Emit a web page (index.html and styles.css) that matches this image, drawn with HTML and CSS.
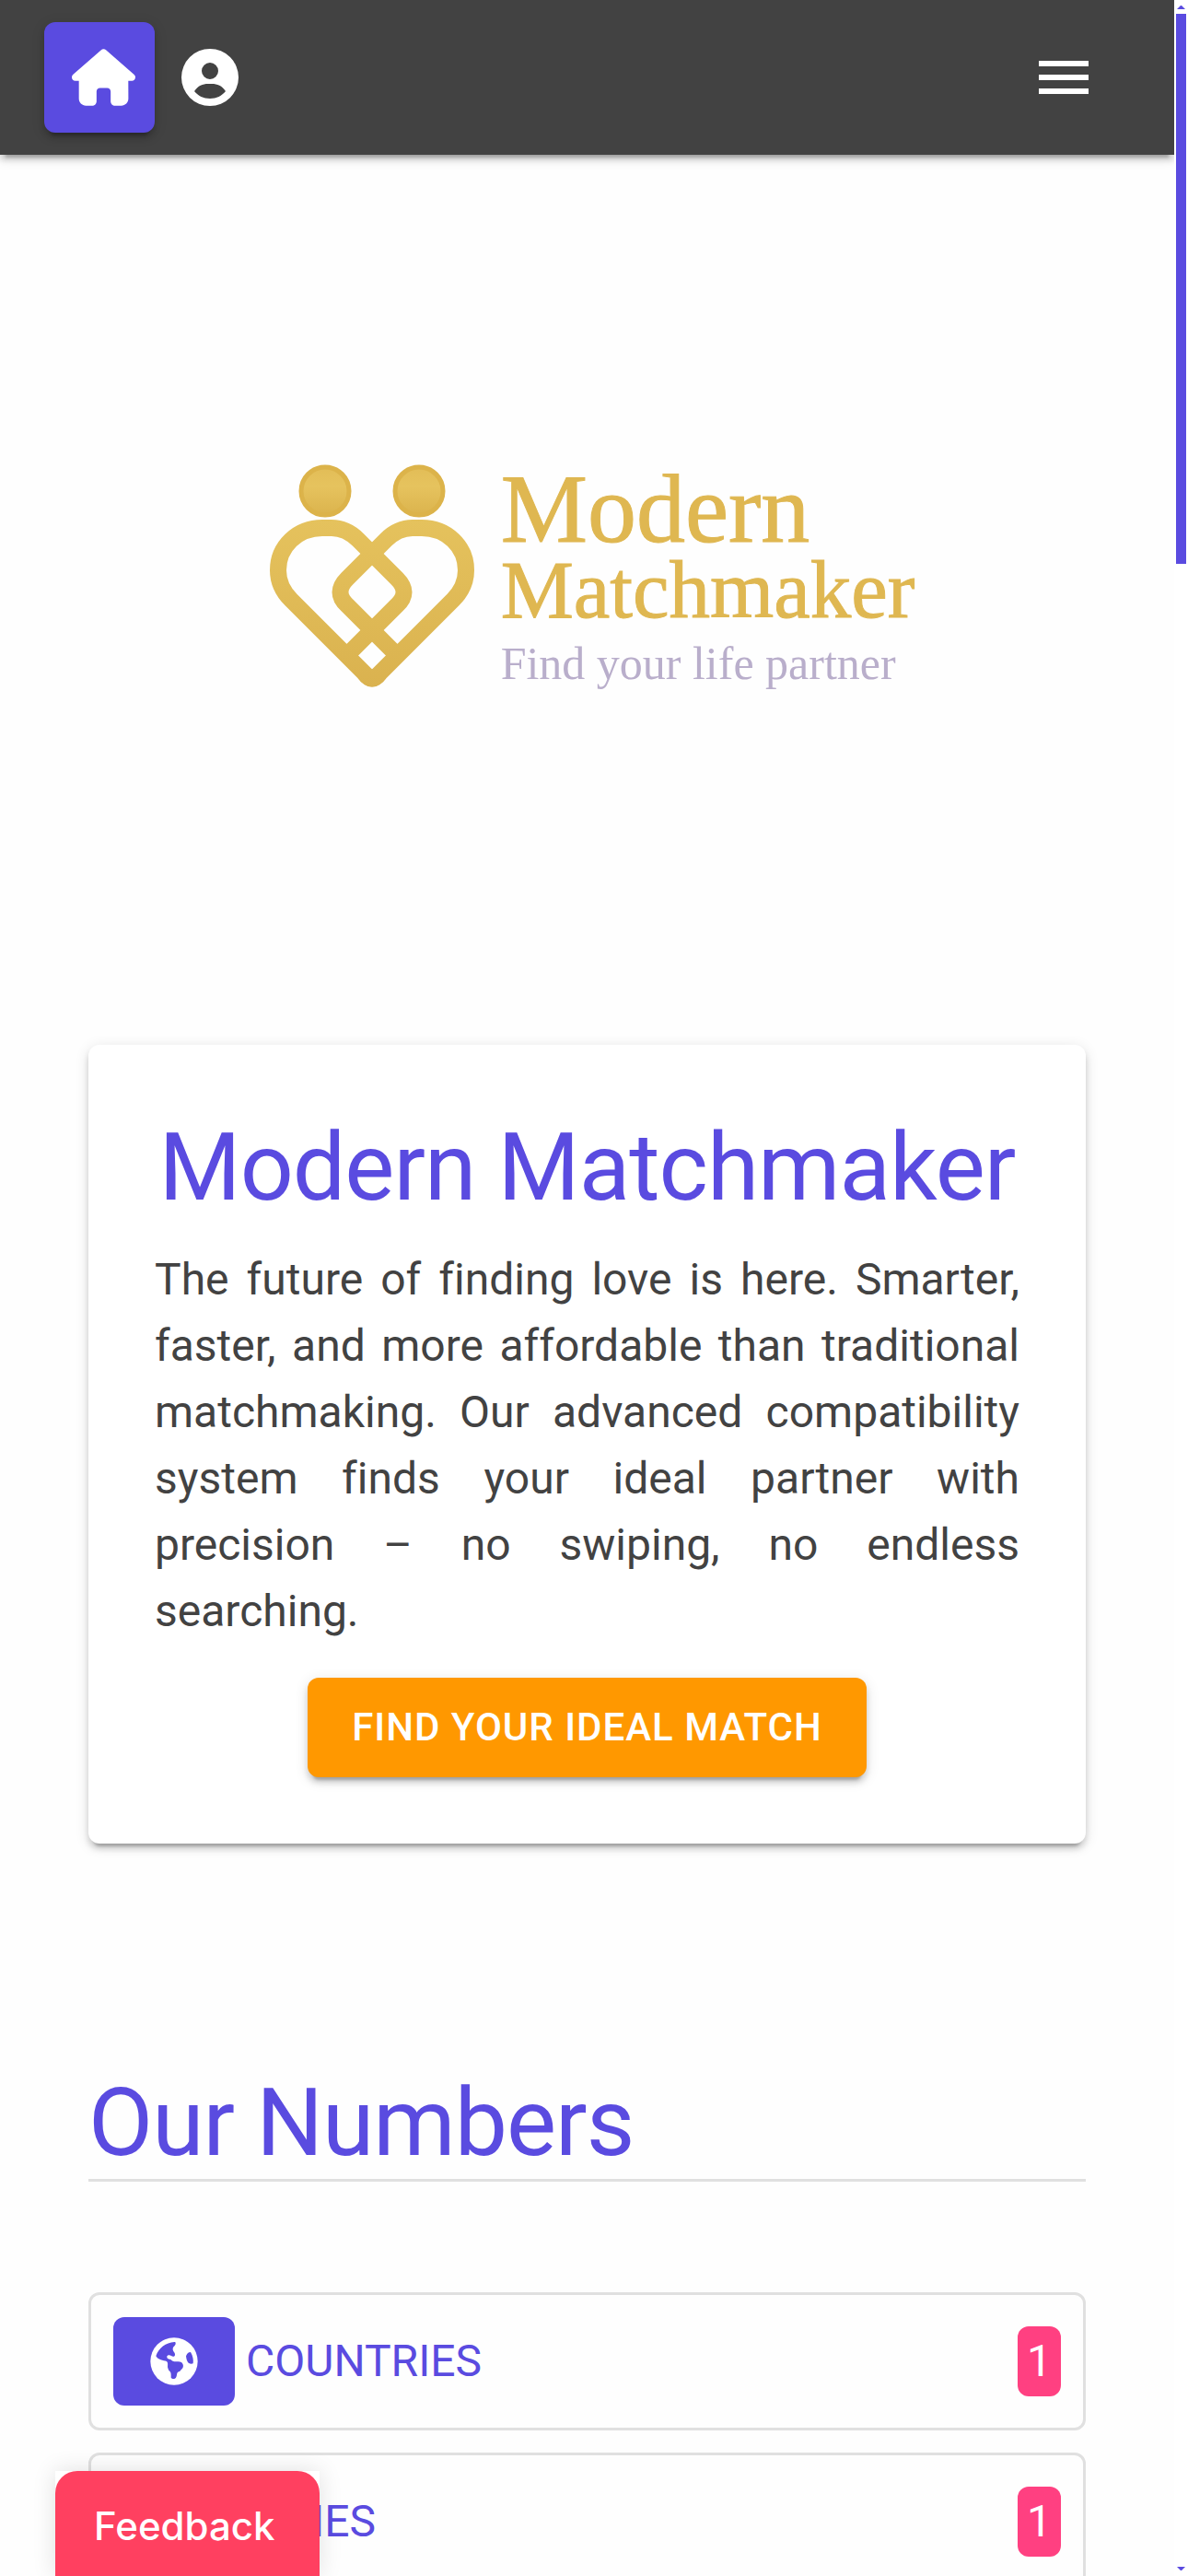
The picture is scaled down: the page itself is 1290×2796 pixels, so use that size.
FILE: index.html
```html
<!DOCTYPE html>
<html lang="en">
<head>
<meta charset="utf-8">
<meta name="viewport" content="width=device-width, initial-scale=1">
<title>Modern Matchmaker</title>
<link rel="stylesheet" href="styles.css">
</head>
<body>
<div class="shell">
  <div class="page">
    <header class="topbar">
      <nav class="topbar-links">
        <a class="home-link" href="#" aria-label="Home">
          <svg class="home-icon" viewBox="0 0 576 512"><path fill="currentColor" d="M575.8 255.500c0 18-15 32.100-32 32.100h-32l.7 160.200c0 35.300-28.700 64.200-64 64.200H392c-22.100 0-40-17.900-40-40v-88c0-17.700-14.300-32-32-32h-64c-17.700 0-32 14.300-32 32v88c0 22.100-17.900 40-40 40h-56c-35.300 0-64-28.700-64-64V287.600H32c-18 0-32-14-32-32.100 0-9 3-17 10-24L266.400 8c7-7 15-8 22-8s15 2 21 7l255.400 224.500c8 7 12 15 11 24z"/></svg>
        </a>
        <a class="account-link" href="#" aria-label="Account">
          <svg class="account-icon" viewBox="0 0 62 62"><path fill="currentColor" fill-rule="evenodd" d="M31 0a31 31 0 1 0 0 62a31 31 0 0 0 0-62zM31 15a9 9 0 1 1 0 18a9 9 0 0 1 0-18zM14 46C18 40 23 38 29 38h4c6 0 11 2 15 8c-4 5-10 8-17 8s-13-3-17-8z"/></svg>
        </a>
      </nav>
      <button class="menu-button" type="button" aria-label="Menu">
        <svg class="menu-icon" viewBox="0 0 54 36"><path fill="currentColor" d="M0 0h54v6H0zM0 15h54v6H0zM0 30h54v6H0z"/></svg>
      </button>
    </header>

    <main>
      <section class="brand">
        <svg class="brand-mark" viewBox="0 0 224 258" aria-hidden="true">
          <defs>
            <linearGradient id="gold" gradientUnits="userSpaceOnUse" x1="0" y1="60" x2="0" y2="242">
              <stop offset="0" stop-color="#e5c25d"/>
              <stop offset="1" stop-color="#dab24f"/>
            </linearGradient>
            <linearGradient id="head" x1="0" y1="0" x2="0" y2="1">
              <stop offset="0" stop-color="#e2bd57"/>
              <stop offset=".4" stop-color="#e6c35e"/>
              <stop offset="1" stop-color="#dbb34d"/>
            </linearGradient>
          </defs>
          <g fill="url(#head)" stroke="#dcb34a" stroke-width="5">
            <circle cx="61" cy="29" r="26"/>
            <circle cx="163" cy="29" r="26"/>
          </g>
          <g fill="none" stroke="url(#gold)" stroke-width="18">
            <path d="M85 207L139 153Q154 139 139 124L97 82C88 73 78 69 68 69H58C31 69 10 89 10 115C10 128 15 138 24 147L104 227Q112 238 120 227"/>
            <path d="M139 207L85 153Q70 139 85 124L127 82C136 73 146 69 156 69H166C193 69 214 89 214 115C214 128 209 138 200 147L120 227Q112 238 104 227"/>
          </g>
        </svg>
        <div class="brand-text">
          <span class="brand-first">Modern</span>
          <span class="brand-second">Matchmaker</span>
          <span class="brand-tagline">Find your life partner</span>
        </div>
      </section>

      <section class="intro card">
        <h1 class="title">Modern Matchmaker</h1>
        <p class="intro-text">The future of finding love is here. Smarter, faster, and more affordable than traditional matchmaking. Our advanced compatibility system finds your ideal partner with precision – no swiping, no endless searching.</p>
        <button class="cta" type="button">FIND YOUR IDEAL MATCH</button>
      </section>

      <section class="numbers">
        <h2 class="title numbers-title">Our Numbers</h2>
        <ul class="stats">
          <li class="stat">
            <a class="stat-icon" href="#" aria-label="Countries">
              <svg class="globe" viewBox="249 200 156 156"><circle cx="327" cy="278" r="77" fill="#fff"/><path fill="#5a4be0" d="M328 215C300 218 277 233 268 261C274 273 292 275 303 278C308 282 306 290 306 297C308 303 309 308 313 310C318 314 317 322 317 331C321 337 330 336 333 331C337 325 335 318 339 313C344 311 348 310 350 305C359 299 359 288 351 281C345 277 337 279 328 279C320 278 318 271 312 271C306 271 303 267 304 261C307 256 314 257 318 260C323 264 331 262 330 256C331 249 323 246 323 238C323 230 333 227 332 219C332 216 331 215 328 215zM381 248C374 248 369 252 366 261C367 270 369 278 374 283C379 286 384 287 389 285C391 274 388 259 381 248z"/></svg>
            </a>
            <span class="stat-name">COUNTRIES</span>
            <span class="badge">1</span>
          </li>
          <li class="stat">
            <a class="stat-icon" href="#" aria-label="Cities"></a>
            <span class="stat-name">CITIES</span>
            <span class="badge">1</span>
          </li>
        </ul>
      </section>
    </main>
  </div>

  <div class="scrollbar" aria-hidden="true">
    <svg class="arrow" viewBox="0 0 15 15"><path d="M7 6h1l4 4H3z"/></svg>
    <div class="thumb"></div>
    <div class="track"></div>
    <svg class="arrow" viewBox="0 0 15 15"><path d="M3 5h9l-4 4H7z"/></svg>
  </div>
</div>

<div class="feedback-frame">
  <button class="feedback" type="button">Feedback</button>
</div>
</body>
</html>
```
FILE: styles.css
```css
* {
  box-sizing: border-box;
}

:root {
  --primary: #5a4be0;
  --dark: #424242;
  --line: #e0e0e0;
  --raised: 0 9px 3px -6px rgba(0, 0, 0, .2), 0 6px 6px 0 rgba(0, 0, 0, .14), 0 3px 15px 0 rgba(0, 0, 0, .12);
}

body {
  margin: 0;
  background: #fefefe;
  color: var(--dark);
  font-family: Roboto, "Liberation Sans", sans-serif;
  font-size: 48px;
  font-variant-ligatures: none;
  line-height: 72px;
}

button {
  border: 0;
  font: inherit;
  color: #fff;
  cursor: pointer;
}

.shell {
  display: flex;
  height: 100vh;
  overflow: hidden;
}

.page {
  flex: 1;
  min-width: 0;
}

.topbar {
  display: flex;
  align-items: center;
  justify-content: space-between;
  padding: 24px 72px 24px 48px;
  background: var(--dark);
  color: #fff;
  box-shadow: var(--raised);
}

.topbar-links {
  display: flex;
  align-items: center;
  gap: 29px;
}

.home-link {
  display: flex;
  align-items: center;
  width: 120px;
  height: 120px;
  padding-left: 30px;
  border-radius: 12px;
  background: var(--primary);
  color: #fff;
  box-shadow: var(--raised);
}

.home-icon {
  width: 69px;
  height: 62px;
}

.account-link {
  display: flex;
  color: #fff;
}

.account-icon {
  width: 62px;
  height: 62px;
}

.menu-button {
  display: flex;
  padding: 21px;
  background: none;
}

.menu-icon {
  width: 54px;
  height: 36px;
}

.brand {
  display: flex;
  align-items: center;
  justify-content: center;
  gap: 28px;
  padding: 336px 0 372px 10px;
}

.brand-mark {
  width: 224px;
  height: 258px;
}

.brand-text {
  display: flex;
  flex-direction: column;
  font-family: "Liberation Serif", serif;
  color: #dfb751;
}

.brand-first {
  font-size: 106px;
  line-height: 88px;
  -webkit-text-stroke: 1px #dfb751;
}

.brand-second {
  font-size: 89px;
  line-height: 86px;
  -webkit-text-stroke: 1px #dfb751;
}

.brand-tagline {
  font-size: 50px;
  line-height: 74px;
  color: #b9aecb;
}

.card {
  margin: 0 96px;
  padding: 72px;
  border-radius: 12px;
  background: #fff;
  box-shadow: var(--raised);
}

.title {
  margin: 0;
  font-size: 102px;
  font-weight: 400;
  line-height: 122px;
  letter-spacing: -1px;
  color: var(--primary);
}

.intro {
  display: flex;
  flex-direction: column;
  align-items: center;
}

.intro .title {
  white-space: nowrap;
}

.intro-text {
  margin: 25px 0 36px;
  text-align: justify;
}

.cta {
  padding: 18px 48px;
  border-radius: 12px;
  background: #ff9800;
  font-size: 42px;
  font-weight: 500;
  letter-spacing: 1px;
  box-shadow: var(--raised);
}

.numbers {
  margin: 242px 96px 0;
}

.numbers-title {
  border-bottom: 3px solid var(--line);
}

.stats {
  display: flex;
  flex-direction: column;
  gap: 24px;
  margin: 120px 0 0;
  padding: 0;
  list-style: none;
}

.stat {
  display: flex;
  align-items: center;
  gap: 12px;
  padding: 24px;
  border: 3px solid var(--line);
  border-radius: 12px;
  color: var(--primary);
}

.stat-icon {
  display: flex;
  align-items: center;
  justify-content: center;
  width: 132px;
  height: 96px;
  border-radius: 12px;
  background: var(--primary);
}

.globe {
  width: 52px;
  height: 52px;
}

.stat-name {
  flex: 1;
}

.badge {
  padding: 2px 10px;
  border-radius: 12px;
  background: #ff4081;
  color: #fff;
}

.scrollbar {
  display: flex;
  flex-direction: column;
  width: 15px;
  padding: 0 2px;
  background: #fff;
}

.arrow {
  width: 15px;
  height: 15px;
  margin-left: -2px;
  fill: var(--primary);
}

.thumb {
  flex: 11;
  background: var(--primary);
}

.track {
  flex: 40;
}

.feedback-frame {
  position: fixed;
  bottom: 0;
  left: 60px;
  background: #fff;
  box-shadow: 0 0 24px rgba(0, 0, 0, .12);
}

.feedback {
  display: block;
  padding: 24px 48px 18px 42px;
  border-radius: 24px 24px 0 0;
  background: #ff4060;
  font-family: Inter, sans-serif;
  font-size: 42px;
  font-weight: 500;
}
```
